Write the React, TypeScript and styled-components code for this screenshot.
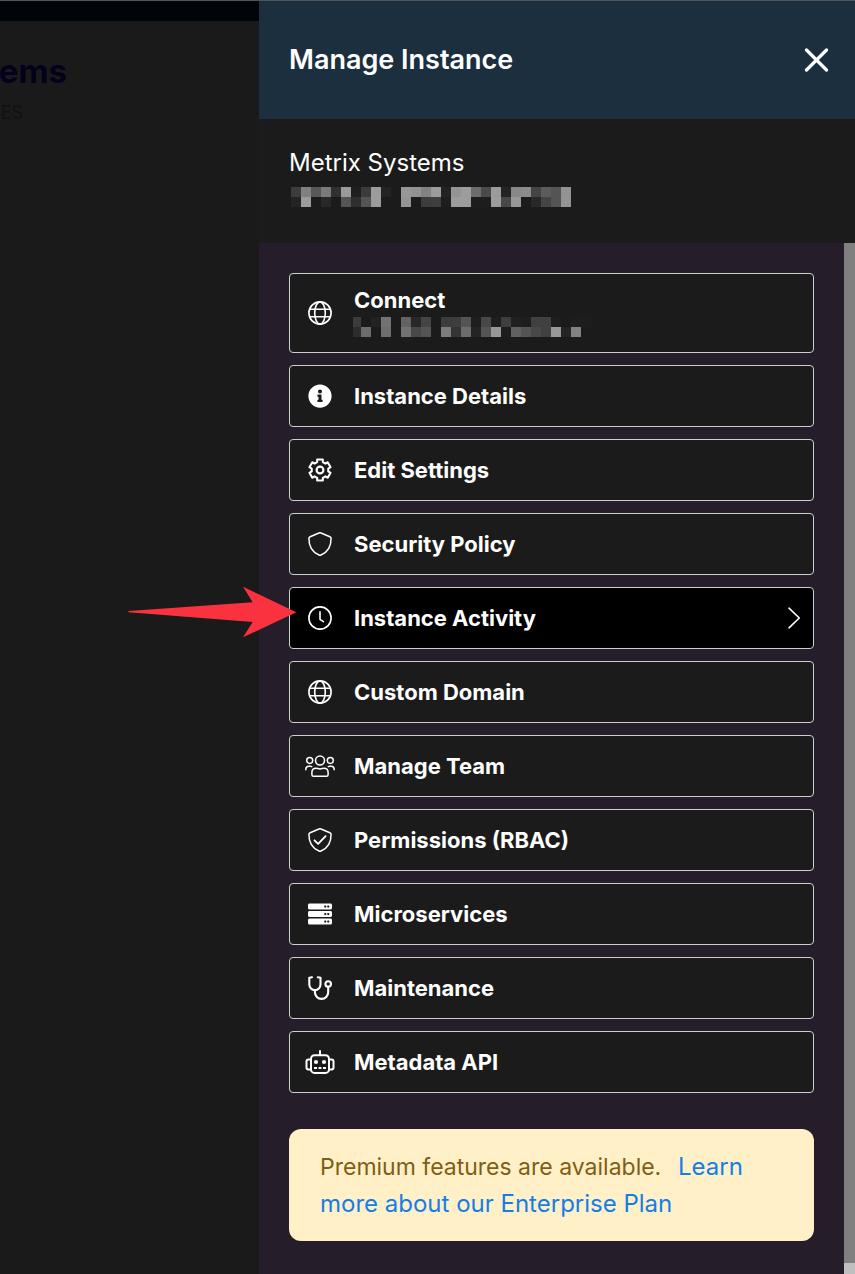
import React from "react";
import styled, { createGlobalStyle } from "styled-components";
import { FaInfoCircle, FaServer } from "react-icons/fa";

const GlobalStyle = createGlobalStyle`
  *, *::before, *::after { box-sizing: border-box; }
  body {
    margin: 0;
    background: #1a1a1a;
    font-family: Inter, "Liberation Sans", sans-serif;
    color: #fff;
  }
  h1, h2, ul { margin: 0; padding: 0; }
`;

const Page = styled.div`
  display: grid;
  grid-template-columns: 259px minmax(0, 1fr);
  min-height: 100vh;
  border-top: 1px solid #4f5558;
`;

const Backdrop = styled.main`
  background: #1a1a1a;
`;

const TopBar = styled.div`
  height: 20px;
  background: #010408;
`;

const Clipped = styled.div`
  display: flex;
  justify-content: flex-end;
  overflow: hidden;
  white-space: nowrap;
`;

const DimTitle = styled(Clipped).attrs({ as: "h1" })`
  width: 67px;
  margin-top: 30px;
  font-size: 33px;
  line-height: 40px;
  font-weight: 700;
  color: #04021a;
`;

const DimLabel = styled(Clipped)`
  width: 23px;
  margin-top: 10px;
  font-size: 18px;
  line-height: 24px;
  color: #111;
`;

const Drawer = styled.aside`
  display: flex;
  flex-direction: column;
  background: #251e2a;
`;

const DrawerHeader = styled.header`
  display: flex;
  align-items: center;
  justify-content: space-between;
  height: 118px;
  padding: 0 26px 0 30px;
  background: #1b2f3f;
`;

const DrawerTitle = styled.h2`
  font-size: 27px;
  line-height: 36px;
  font-weight: 600;
`;

const CloseButton = styled.button`
  display: flex;
  padding: 0;
  border: 0;
  background: none;
  color: #fff;
  cursor: pointer;
`;

const InstanceSummary = styled.section`
  height: 124px;
  padding: 28px 30px;
  background: #1b1b1b;
  font-size: 24px;
  line-height: 32px;
`;

const Redacted = styled.svg<{ $inset: number }>`
  display: block;
  margin-left: ${(p) => p.$inset}px;
`;

const SummaryMask = styled.div`
  padding-top: 8px;
`;

const ItemMask = styled.span`
  display: block;
  padding: 3px 0;
`;

const Scroller = styled.div`
  display: flex;
  flex: 1;
`;

const Content = styled.div`
  flex: 1;
  min-width: 0;
  padding: 30px 30px 32px;
`;

const Scrollbar = styled.div`
  display: flex;
  width: 11px;
  padding-bottom: 11px;
  background: #bfbfbf;
`;

const Thumb = styled.div`
  flex: 1;
  background: #808080;
`;

const Menu = styled.ul`
  display: flex;
  flex-direction: column;
  gap: 12px;
  list-style: none;
`;

const MenuItem = styled.li`
  position: relative;
`;

const MenuButton = styled.button<{ $active?: boolean; $tall?: boolean }>`
  display: flex;
  align-items: center;
  gap: 19px;
  width: 100%;
  height: ${(p) => (p.$tall ? 80 : 62)}px;
  padding: 0 12px 0 15px;
  border: 1px solid #d0ced1;
  border-radius: 4px;
  background: ${(p) => (p.$active ? "#000" : "#1b1b1b")};
  color: #fff;
  font: 700 22px/28px Inter, "Liberation Sans", sans-serif;
  text-align: left;
  cursor: pointer;
`;

const IconBox = styled.span`
  display: flex;
  flex: none;
  justify-content: center;
  width: 30px;
`;

const Label = styled.span`
  flex: 1;
  min-width: 0;
`;

const Pointer = styled.svg`
  position: absolute;
  left: -161px;
  top: -1px;
  pointer-events: none;
`;

const Notice = styled.p`
  margin: 36px 0 0;
  padding: 19px 31px;
  border-radius: 12px;
  background: #fff0c8;
  color: #7f5e14;
  font-size: 24px;
  line-height: 37px;
`;

const NoticeText = styled.span`
  margin-right: 10px;
  font-size: 23px;
  line-height: 1;
`;

const NoticeLink = styled.a`
  color: #147ee8;
  text-decoration: none;
`;

const shade = (hex: string) => hex.split(" ");

const summaryMask = [
  shade("3c 80 58 7a 30 9a 1f 3c 9c 24 1b 98 92 82 9c 22 94 9c 6c 4a 9c 24 88 8c 44 5c 54 92"),
  shade("24 9c 1b 28 1b 54 2e 54 9c 1b 1b 94 1b 3c 3e 1e 9c 9c 1d 1d 9c 48 98 1b 28 44 54 94"),
];
const connectMask = [
  shade("3c 1b 22 72 1b 62 28 44 1b 3c 3e 54 1e 48 1e 3e 20 1e 40 40 1e 1b 1d 1d"),
  shade("2c 6c 1b 6e 1b 72 48 54 1b 7c 34 6c 24 54 98 1e 60 54 48 40 98 24 82 1b"),
];

function Mosaic({ rows, clip = 0, inset = 0 }: { rows: string[][]; clip?: number; inset?: number }) {
  const width = rows[0].length * 10 - clip;
  return (
    <Redacted
      $inset={inset}
      width={width}
      height={20}
      viewBox={`${clip} 0 ${width} 20`}
      shapeRendering="crispEdges"
      aria-hidden="true"
    >
      {rows.map((row, y) =>
        row.map((c, x) => (
          <rect key={`${x}-${y}`} x={x * 10} y={y * 10} width={10} height={10} fill={`#${c}${c}${c}`} />
        ))
      )}
    </Redacted>
  );
}

function Line({ w = 24, sw = 1.4, children }: { w?: number; sw?: number; children: React.ReactNode }) {
  return (
    <svg
      width={w}
      height={24}
      viewBox={`0 0 ${w} 24`}
      fill="none"
      stroke="currentColor"
      strokeWidth={sw}
      strokeLinecap="round"
      strokeLinejoin="round"
      aria-hidden="true"
    >
      {children}
    </svg>
  );
}

const Globe = () => (
  <Line sw={1.6}>
    <circle cx="12" cy="12" r="11.1" />
    <ellipse cx="12" cy="12" rx="5.3" ry="11.1" />
    <path d="M1.6 8.2h20.8M1.6 15.8h20.8" />
  </Line>
);

const gearPath = (() => {
  const points: string[] = [];
  for (let i = 0; i < 6; i++) {
    const base = -90 + i * 60;
    [[-20, 8.4], [-15, 10.9], [15, 10.9], [20, 8.4]].forEach(([offset, r]) => {
      const a = ((base + offset) * Math.PI) / 180;
      points.push(`${(12 + r * Math.cos(a)).toFixed(2)} ${(12 + r * Math.sin(a)).toFixed(2)}`);
    });
  }
  return `M${points.join("L")}Z`;
})();

const Gear = () => (
  <Line sw={2.1}>
    <path d={gearPath} />
    <circle cx="12" cy="12" r="3.4" />
  </Line>
);

const shieldPath =
  "M12 .8c.4 0 .7.1 1 .2l8.9 3.7c.8.3 1.2 1 1.2 1.8 0 8.5-4.3 14.1-10.1 16.5a2.6 2.6 0 0 1-2 0C5.2 20.6.9 15 .9 6.5c0-.8.4-1.5 1.2-1.8L11 1c.3-.1.6-.2 1-.2z";

const Shield = () => (
  <Line sw={1.5}>
    <path d={shieldPath} />
  </Line>
);

const ShieldCheck = () => (
  <Line sw={1.5}>
    <path d={shieldPath} />
    <path d="M6.5 12.3l3.6 3.6 7.5-7.8" strokeWidth="1.8" />
  </Line>
);

const Clock = () => (
  <Line sw={1.6}>
    <circle cx="12" cy="12" r="11.1" />
    <path d="M12 5.8v7.5l3.4 2.4" />
  </Line>
);

const Users = () => (
  <Line w={30} sw={1.5}>
    <circle cx="15" cy="6.5" r="4.5" />
    <circle cx="4.7" cy="6.4" r="3" />
    <circle cx="25.3" cy="6.4" r="3" />
    <path d="M8.5 22.3h13c.9 0 1.6-.7 1.6-1.6V18.5c0-2.6-1.9-4.2-4.3-4.2-1.3 0-1.9.6-3.8.6s-2.5-.6-3.8-.6c-2.4 0-4.3 1.6-4.3 4.2v2.2c0 .9.7 1.6 1.6 1.6z" />
    <path d="M.8 15.7c0-2 1.3-3.4 3.2-3.4h1.4c.5 0 .9.1 1.3.3M29.2 15.7c0-2-1.3-3.4-3.2-3.4h-1.4c-.5 0-.9.1-1.3.3" />
  </Line>
);

const Stethoscope = () => (
  <Line sw={2.1}>
    <path d="M4 1.2l-2.7.5v6.8a5.6 5.6 0 0 0 11.2 0V1.7l-2.7-.5" />
    <path d="M6.9 14.2v2a6.65 6.65 0 0 0 13.3 0v-5.3" />
    <circle cx="20.2" cy="8" r="2.8" />
  </Line>
);

const Robot = () => (
  <Line w={30} sw={2}>
    <rect x="6" y="5.2" width="18" height="17.7" rx="3.5" />
    <path d="M15 1v4M5.5 9.6H3.5a2 2 0 0 0-2 2v6a2 2 0 0 0 2 2h2M24.5 9.6h2a2 2 0 0 1 2 2v6a2 2 0 0 1-2 2h-2" />
    <g fill="currentColor" stroke="none">
      <circle cx="11" cy="12" r="2.1" />
      <circle cx="19" cy="12" r="2.1" />
      <path d="M9 17h3v2H9zM13.5 17h3v2h-3zM18 17h3v2h-3z" />
    </g>
  </Line>
);

const items: { label: string; icon: React.ReactNode; active?: boolean; masked?: boolean }[] = [
  { label: "Connect", icon: <Globe />, masked: true },
  { label: "Instance Details", icon: <FaInfoCircle size={24} /> },
  { label: "Edit Settings", icon: <Gear /> },
  { label: "Security Policy", icon: <Shield /> },
  { label: "Instance Activity", icon: <Clock />, active: true },
  { label: "Custom Domain", icon: <Globe /> },
  { label: "Manage Team", icon: <Users /> },
  { label: "Permissions (RBAC)", icon: <ShieldCheck /> },
  { label: "Microservices", icon: <FaServer size={24} /> },
  { label: "Maintenance", icon: <Stethoscope /> },
  { label: "Metadata API", icon: <Robot /> },
];

export default function App() {
  return (
    <>
      <GlobalStyle />
      <Page>
        <Backdrop>
          <TopBar />
          <DimTitle>tems</DimTitle>
          <DimLabel>ES</DimLabel>
        </Backdrop>
        <Drawer>
          <DrawerHeader>
            <DrawerTitle>Manage Instance</DrawerTitle>
            <CloseButton aria-label="Close">
              <svg width="25" height="24" viewBox="0 0 25 24" stroke="currentColor" strokeWidth="3.2" strokeLinecap="round" aria-hidden="true">
                <path d="M2.5 2l20 20M22.5 2l-20 20" />
              </svg>
            </CloseButton>
          </DrawerHeader>
          <InstanceSummary>
            Metrix Systems
            <SummaryMask>
              <Mosaic rows={summaryMask} inset={2} />
            </SummaryMask>
          </InstanceSummary>
          <Scroller>
            <Content>
              <Menu>
                {items.map((item) => (
                  <MenuItem key={item.label}>
                    <MenuButton $active={item.active} $tall={item.masked}>
                      <IconBox>{item.icon}</IconBox>
                      <Label>
                        {item.label}
                        {item.masked && (
                          <ItemMask>
                            <Mosaic rows={connectMask} clip={2} inset={-1} />
                          </ItemMask>
                        )}
                      </Label>
                      {item.active && (
                        <svg width="14" height="24" viewBox="0 0 14 24" fill="none" stroke="currentColor" strokeWidth="1.6" strokeLinecap="round" strokeLinejoin="round" aria-hidden="true">
                          <path d="M2 2.2l10.3 9.8L2 21.8" />
                        </svg>
                      )}
                    </MenuButton>
                    {item.active && (
                      <Pointer width="170" height="52" viewBox="0 0 170 52" aria-hidden="true">
                        <path d="M.5 25L124.7 16.3 115 .7 168.3 26.3 115 51.3 124.7 36 .5 26.3z" fill="#fa323f" />
                      </Pointer>
                    )}
                  </MenuItem>
                ))}
              </Menu>
              <Notice>
                <NoticeText>Premium features are available.</NoticeText>{" "}
                <NoticeLink href="#enterprise">Learn more about our Enterprise Plan</NoticeLink>
              </Notice>
            </Content>
            <Scrollbar aria-hidden="true">
              <Thumb />
            </Scrollbar>
          </Scroller>
        </Drawer>
      </Page>
    </>
  );
}
